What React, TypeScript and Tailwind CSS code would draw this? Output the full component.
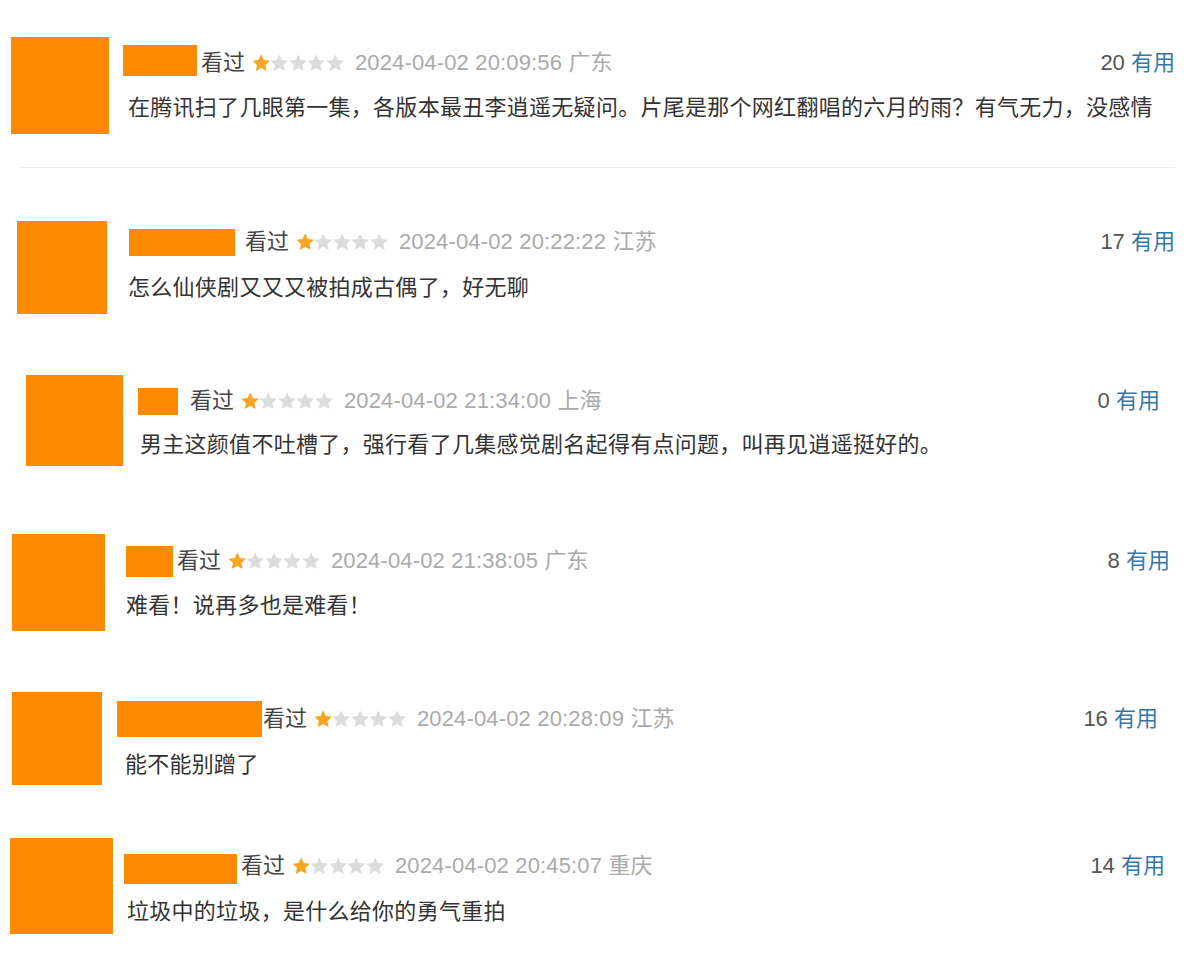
const font = { fontFamily: '"Liberation Sans", "Noto Sans CJK SC", sans-serif' };

interface Comment {
  id: number;
  date: string;
  place: string;
  votes: number;
  text: string;
  row: string;
  avatar: string;
  body: string;
  nameBox: string;
  textCls: string;
}

const comments: Comment[] = [
  {
    id: 1,
    date: '2024-04-02 20:09:56',
    place: '广东',
    votes: 20,
    text: '在腾讯扫了几眼第一集，各版本最丑李逍遥无疑问。片尾是那个网红翻唱的六月的雨？有气无力，没感情',
    row: 'mt-[37px] pl-[11px] h-[97px]',
    avatar: 'w-[98px] h-[97px]',
    body: 'pl-[14px] pt-[10px] pr-[25px]',
    nameBox: 'w-[74px] h-[31px] mr-[4px] -mt-[5px]',
    textCls: 'mt-[13px] ml-[5px]',
  },
  {
    id: 2,
    date: '2024-04-02 20:22:22',
    place: '江苏',
    votes: 17,
    text: '怎么仙侠剧又又又被拍成古偶了，好无聊',
    row: 'mt-[53px] pl-[17px] h-[93px]',
    avatar: 'w-[90px] h-[93px]',
    body: 'pl-[22px] pt-[5px] pr-[25px]',
    nameBox: 'w-[106px] h-[27px] mr-[10px]',
    textCls: 'mt-[14px] -ml-[1px]',
  },
  {
    id: 3,
    date: '2024-04-02 21:34:00',
    place: '上海',
    votes: 0,
    text: '男主这颜值不吐槽了，强行看了几集感觉剧名起得有点问题，叫再见逍遥挺好的。',
    row: 'mt-[61px] pl-[26px] h-[91px]',
    avatar: 'w-[97px] h-[91px]',
    body: 'pl-[15px] pt-[10px] pr-[40px]',
    nameBox: 'w-[40px] h-[27px] mr-[12px]',
    textCls: 'mt-[12px] ml-[2px]',
  },
  {
    id: 4,
    date: '2024-04-02 21:38:05',
    place: '广东',
    votes: 8,
    text: '难看！说再多也是难看！',
    row: 'mt-[68px] pl-[12px] h-[97px]',
    avatar: 'w-[93px] h-[97px]',
    body: 'pl-[21px] pt-[11px] pr-[30px]',
    nameBox: 'w-[47px] h-[31px] mr-[4px]',
    textCls: 'mt-[13px]',
  },
  {
    id: 5,
    date: '2024-04-02 20:28:09',
    place: '江苏',
    votes: 16,
    text: '能不能别蹭了',
    row: 'mt-[61px] pl-[12px] h-[93px]',
    avatar: 'w-[90px] h-[93px]',
    body: 'pl-[15px] pt-[11px] pr-[42px]',
    nameBox: 'w-[145px] h-[36px] mr-[1px]',
    textCls: 'mt-[14px] ml-[8px]',
  },
  {
    id: 6,
    date: '2024-04-02 20:45:07',
    place: '重庆',
    votes: 14,
    text: '垃圾中的垃圾，是什么给你的勇气重拍',
    row: 'mt-[53px] pl-[10px] h-[96px]',
    avatar: 'w-[103px] h-[96px]',
    body: 'pl-[11px] pt-[12px] pr-[35px]',
    nameBox: 'w-[113px] h-[30px] mr-[4px] mt-[6px]',
    textCls: 'mt-[14px] ml-[3px]',
  },
];

function Star({ on }: { on: boolean }) {
  return (
    <svg width="18.4" height="18.4" viewBox="1.3 1.3 21.4 21.4">
      <path
        d="M12 1.8l3.1 6.6 7.1.8-5.3 4.9 1.5 7.1L12 17.6l-6.4 3.6 1.5-7.1-5.3-4.9 7.1-.8z"
        fill={on ? '#f5a623' : '#dcdcdc'}
      />
    </svg>
  );
}

function Rating() {
  return (
    <span className="flex items-center ml-[7px] mr-[11px]">
      <Star on />
      <Star on={false} />
      <Star on={false} />
      <Star on={false} />
      <Star on={false} />
    </span>
  );
}

export default function App() {
  return (
    <div className="w-[1200px] h-[955px] bg-white overflow-hidden" style={font}>
      {comments.map((c) => (
        <div key={c.id}>
          <div className={`flex ${c.row}`}>
            <div className={`bg-[#fd8a02] shrink-0 ${c.avatar}`} />
            <div className={`flex-1 flex flex-col ${c.body}`}>
              <div className="flex items-center h-[32px] text-[22px] leading-[32px]">
                <div className={`bg-[#fd8a02] shrink-0 ${c.nameBox}`} />
                <span className="text-[#444]">看过</span>
                <Rating />
                <span className="text-[#aaa] tracking-[0.15px]">
                  {c.date} {c.place}
                </span>
                <span className="ml-auto text-[#555]">
                  {c.votes} <span className="text-[#3377aa]">有用</span>
                </span>
              </div>
              <p className={`text-[22px] leading-[32px] text-[#333] tracking-[0.28px] whitespace-nowrap ${c.textCls}`}>
                {c.text}
              </p>
            </div>
          </div>
          {c.id === 1 && <div className="mt-[33px] ml-[20px] w-[1155px] h-px bg-[#ececec]" />}
        </div>
      ))}
    </div>
  );
}
